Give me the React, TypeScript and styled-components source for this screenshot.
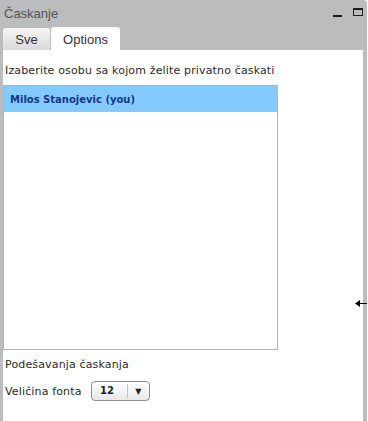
import React from "react";
import styled, { createGlobalStyle } from "styled-components";

const GlobalStyle = createGlobalStyle`
  html, body {
    margin: 0;
    padding: 0;
    background: #ffffff;
  }
  body {
    font-family: "Liberation Sans", Arial, sans-serif;
  }
`;

const Window = styled.div`
  position: relative;
  width: 367px;
  min-height: 421px;
  box-sizing: border-box;
  padding: 0 4px 0 3px;
  background: #bbbcbd;
  border-top-right-radius: 4px;
  display: flex;
  flex-direction: column;
`;

const Header = styled.div`
  height: 27px;
  display: flex;
  align-items: center;
  justify-content: space-between;
  padding-left: 1px;
`;

const Title = styled.span`
  font-size: 13px;
  color: #545454;
`;

const Controls = styled.div`
  display: flex;
  align-items: flex-start;
  gap: 11px;
  height: 10px;
  margin-top: -2px;
  margin-right: 0;
`;

const MinBtn = styled.span`
  display: block;
  width: 9px;
  height: 2px;
  margin-top: 7px;
  background: #1e1e1e;
`;

const MaxBtn = styled.span`
  display: block;
  width: 10px;
  height: 8px;
  box-sizing: border-box;
  border: 1px solid #1e1e1e;
  border-top-width: 2px;
`;

const TabRow = styled.div`
  height: 23px;
  display: flex;
  align-items: flex-end;
  gap: 1px;
`;

const Tab = styled.div<{ $active?: boolean }>`
  height: ${({ $active }) => ($active ? "23px" : "22px")};
  width: ${({ $active }) => ($active ? "69px" : "47px")};
  box-sizing: border-box;
  display: flex;
  align-items: center;
  justify-content: center;
  font-size: 13px;
  color: #333;
  border-radius: 3px 3px 0 0;
  background: ${({ $active }) =>
    $active ? "#ffffff" : "linear-gradient(#f5f5f5, #dadada)"};
  padding-top: 1px;
`;

const Content = styled.div`
  flex: 1;
  background: #ffffff;
  display: flex;
  flex-direction: column;
  font-family: "DejaVu Sans", Verdana, sans-serif;
  font-size: 11px;
  letter-spacing: 0.15px;
  color: #2a2a2a;
`;

const Label = styled.div<{ $top: number }>`
  margin-top: ${({ $top }) => $top}px;
  padding-left: 2px;
  line-height: 13px;
`;

const UserList = styled.div`
  margin-top: 8px;
  width: 275px;
  height: 265px;
  box-sizing: border-box;
  border: 1px solid #b4b4b4;
`;

const UserRow = styled.div<{ $selected?: boolean }>`
  height: 26px;
  display: flex;
  align-items: center;
  padding-left: 6px;
  font-size: 10px;
  letter-spacing: 0;
  font-weight: bold;
  color: #17368a;
  background: ${({ $selected }) => ($selected ? "#83cbff" : "transparent")};
`;

const FontRow = styled.div`
  margin-top: 10px;
  display: flex;
  align-items: center;
  padding-left: 2px;
`;

const FontLabel = styled.span`
  width: 86px;
`;

const Select = styled.div`
  width: 59px;
  height: 20px;
  box-sizing: border-box;
  border: 1px solid #8e8e8e;
  border-radius: 4px;
  background: linear-gradient(#ffffff, #e8e8e8);
  display: flex;
  align-items: center;
`;

const SelectValue = styled.span`
  flex: 1;
  padding-left: 8px;
  font-weight: bold;
  font-size: 10px;
  letter-spacing: 0;
  color: #222;
  border-right: 1px solid #c4c4c4;
  line-height: 14px;
`;

const SelectArrow = styled.span`
  width: 21px;
  display: flex;
  justify-content: center;
  font-size: 8px;
  color: #222;
`;

const ResizeArrow = styled.svg`
  position: absolute;
  right: 0;
  top: 299px;
`;

export default function App() {
  return (
    <>
      <GlobalStyle />
      <Window>
        <Header>
          <Title>Časkanje</Title>
          <Controls>
            <MinBtn />
            <MaxBtn />
          </Controls>
        </Header>
        <TabRow>
          <Tab>Sve</Tab>
          <Tab $active>Options</Tab>
        </TabRow>
        <Content>
          <Label $top={14}>Izaberite osobu sa kojom želite privatno časkati</Label>
          <UserList>
            <UserRow $selected>Milos Stanojevic (you)</UserRow>
          </UserList>
          <Label $top={8}>Podešavanja časkanja</Label>
          <FontRow>
            <FontLabel>Veličina fonta</FontLabel>
            <Select>
              <SelectValue>12</SelectValue>
              <SelectArrow>▼</SelectArrow>
            </Select>
          </FontRow>
        </Content>
        <ResizeArrow width="12" height="9" viewBox="0 0 12 9">
          <path d="M0 4.5 L5 1 L5 8 Z" fill="#000" />
          <rect x="4" y="4" width="8" height="1" fill="#000" />
        </ResizeArrow>
      </Window>
    </>
  );
}
